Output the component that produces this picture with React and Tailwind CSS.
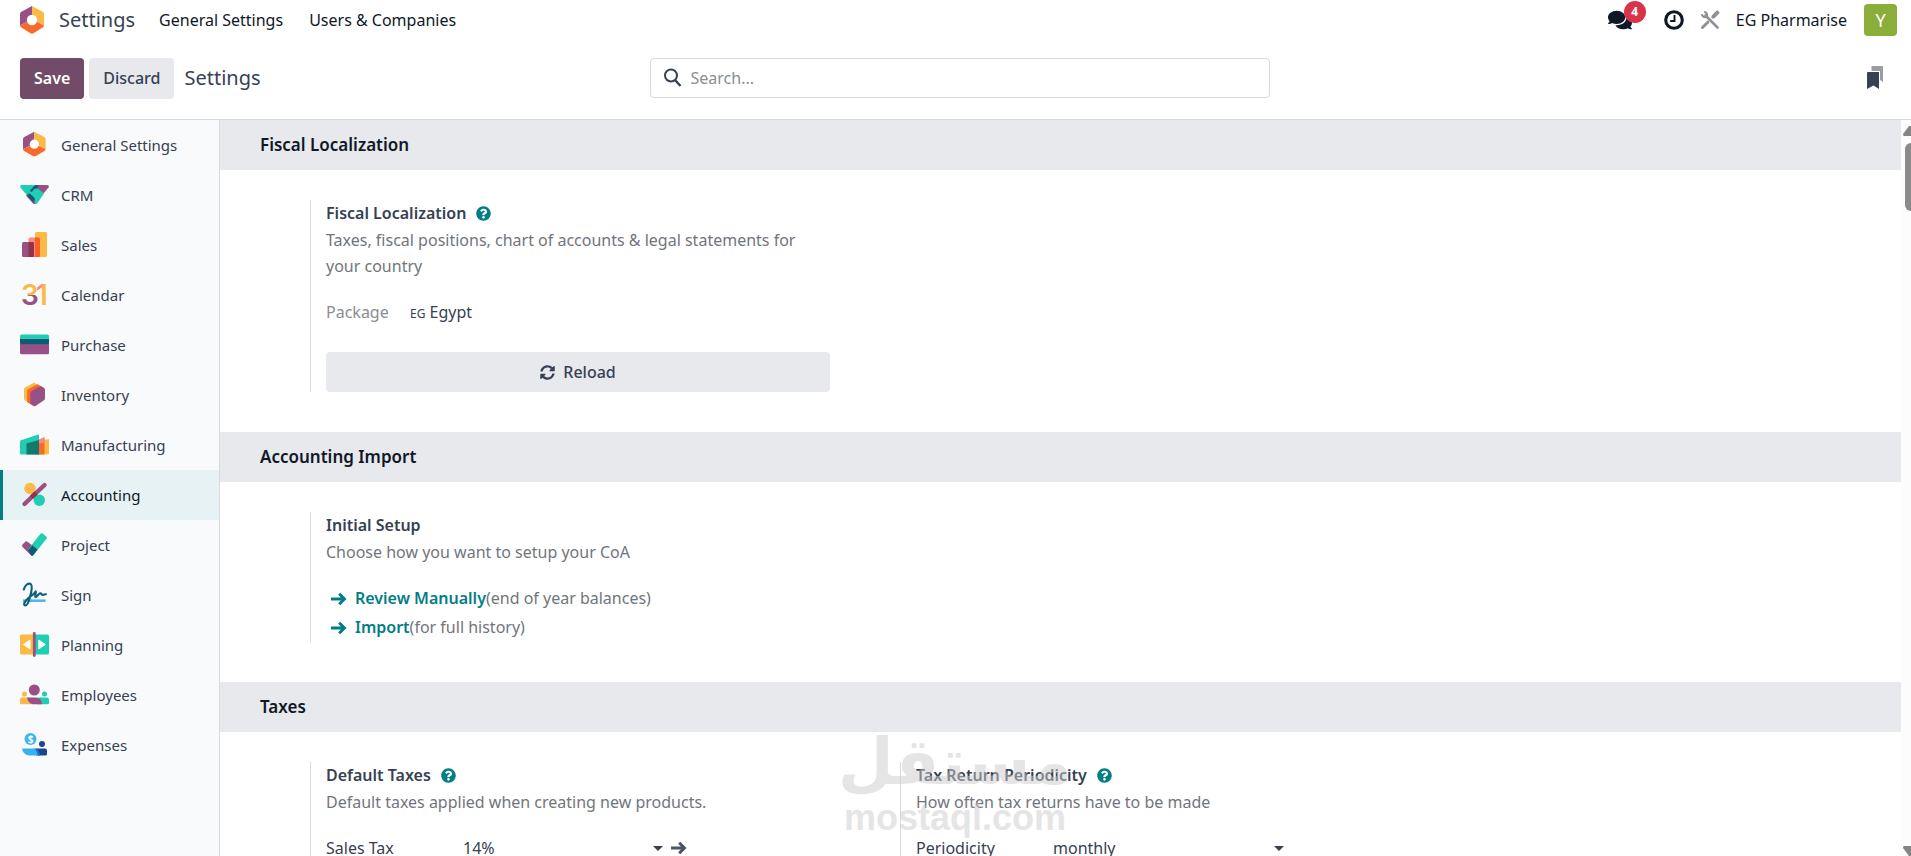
import { FaComments, FaQuestionCircle, FaSyncAlt } from "react-icons/fa";

const SettingsLogo = ({ className }) => (
  <svg viewBox="0 0 26 28" className={className} aria-hidden="true">
    <path d="M13 0 2 6Q1 6.600 1 8v11.500l12-6.500z" fill="#985184" />
    <path d="M13 0l11 6q1 .6 1 2v11.500l-12-6.500z" fill="#fbb945" />
    <path d="M1 19.500 13 13l12 6.500q0 1.200-1 1.800L14.500 27.300q-1.500.9-3 0L2 21.300q-1-.6-1-1.800z" fill="#f86a2c" />
    <circle cx="13" cy="14" r="5.200" fill="#fff" />
  </svg>
);

const AppIcon = ({ children }) => (
  <svg viewBox="0 0 30 30" className="size-[30px] shrink-0" aria-hidden="true">
    {children}
  </svg>
);

const apps = [
  {
    name: "General Settings",
    icon: (
      <AppIcon>
        <path d="M14.300 1.700 4.300 7Q3 7.800 3 9v10l11.300-5z" fill="#985184" />
        <path d="M14.300 1.700l10 5.300q1.300.8 1.300 2v10l-11.300-5z" fill="#fbb945" />
        <path d="M3 19l11.300-5 11.300 5q0 1.500-1.200 2.100l-8.600 5q-1.500.8-3 0l-8.600-5Q3 20.500 3 19z" fill="#f86a2c" />
        <circle cx="14.300" cy="14.200" r="4.600" fill="#fff" />
      </AppIcon>
    ),
  },
  {
    name: "CRM",
    icon: (
      <AppIcon>
        <path d="M15 5h12.500q2 .4 1.200 2.200L23.500 13.500 13 7z" fill="#985184" />
        <path d="M1.300 5H13l11 8.500-6.500 9.500q-1.800 1.800-3.800.3L.6 7.800Q-.5 5.600 1.300 5z" fill="#21cdb4" />
        <path d="M6 15.500 8 13.500l7 7v3.500q-1 .2-2-.6z" fill="#985184" />
        <path d="M7.500 16.500l.8-2.600q1-.9 2.200.2l4 4q.8 1.300 0 2.500l-1.800 1.200z" fill="#0f5a75" />
        <path d="M10 10.500 15 5h3.500l-.8 3.300-3.200.4-2.500 3q-1.500.5-2-1.200z" fill="#0f5a75" />
      </AppIcon>
    ),
  },
  {
    name: "Sales",
    icon: (
      <AppIcon>
        <rect x="15" y="2" width="12" height="25" rx="1.500" fill="#fbb945" />
        <rect x="8.500" y="7.500" width="11.500" height="19.500" rx="1.500" fill="#fc868b" />
        <path d="M15 7.500h3.500q1.500 0 1.500 1.500v16.500q0 1.500-1.500 1.500H15z" fill="#f86126" />
        <rect x="2" y="12" width="12" height="15" rx="1.500" fill="#985184" />
        <path d="M8.500 12h4q1.500 0 1.500 1.500v12q0 1.500-1.500 1.500h-4z" fill="#953047" />
      </AppIcon>
    ),
  },
  {
    name: "Calendar",
    icon: (
      <AppIcon>
        <defs>
          <linearGradient id="calendar-three" gradientUnits="userSpaceOnUse" x1="0" y1="0" x2="0" y2="30">
            <stop offset="50%" stopColor="#fbb945" />
            <stop offset="50%" stopColor="#985184" />
          </linearGradient>
          <linearGradient id="calendar-one" gradientUnits="userSpaceOnUse" x1="17" y1="4" x2="27" y2="10">
            <stop offset="45%" stopColor="#fc868b" />
            <stop offset="45%" stopColor="#fbb945" />
          </linearGradient>
        </defs>
        <g fontFamily="Inter, sans-serif" fontSize="28" fontWeight="600">
          <text x="1" y="25" fill="url(#calendar-three)">3</text>
          <text x="16" y="25" fill="url(#calendar-one)">1</text>
        </g>
      </AppIcon>
    ),
  },
  {
    name: "Purchase",
    icon: (
      <AppIcon>
        <path d="M1.500 4.500h26Q29 4.500 29 6v3.500H0V6q0-1.500 1.500-1.500z" fill="#21cdb4" />
        <path d="M0 14h29v9q0 1.300-1.500 1.300h-26Q0 24.300 0 23z" fill="#985184" />
        <path d="M0 9h29v4.300q0 1-1 1H1q-1 0-1-1z" fill="#0f5a75" />
      </AppIcon>
    ),
  },
  {
    name: "Inventory",
    icon: (
      <AppIcon>
        <path d="M14 2.700 5 7.500Q4 8 4 9.500v9q0 1.300 1 1.900l5 3L20 6z" fill="#fbb945" />
        <path d="M17.500 4.200 8 9.300q-.8.600-.8 1.700v11.200l4 2.300L23.500 7.500z" fill="#f86a2c" />
        <path d="M19.500 6.500q1-.5 2 0l2.500 1.400q1 .6 1 1.700v8.700q0 1.300-1 1.900l-8.500 5.700q-1 .6-2 0L10.300 24V13.200q0-1.200 1-1.900z" fill="#985184" />
      </AppIcon>
    ),
  },
  {
    name: "Manufacturing",
    icon: (
      <AppIcon>
        <path d="M19 10.500l10-1.200v13.700q0 1.500-1.500 1.500H19z" fill="#fbb945" />
        <path d="M16 11l8.500-3.800v17.300H16z" fill="#f86a2c" />
        <path d="M16 11l8.500-3.800v5.300L16 14z" fill="#fc868b" />
        <path d="M1 10.200 18.200 4.500q.8 0 .8.800v19.200H1.500Q0 24.500 0 23V11.500q0-.8 1-1.300z" fill="#21cdb4" />
        <path d="M6.500 13.500 19 10v14.500H6.500z" fill="#14786c" />
      </AppIcon>
    ),
  },
  {
    name: "Accounting",
    icon: (
      <AppIcon>
        <circle cx="10" cy="8.500" r="5.700" fill="#fbb945" />
        <circle cx="19.300" cy="20.300" r="5.700" fill="#21cdb4" />
        <path d="M4.500 24 24.500 5" stroke="#985184" strokeWidth="4.400" strokeLinecap="round" />
        <path d="M11.500 17.300 16 13" stroke="#953047" strokeWidth="4.400" />
      </AppIcon>
    ),
  },
  {
    name: "Project",
    icon: (
      <AppIcon>
        <path d="M2.500 14.500l3-3q1-.7 2 .2l10 7.800-4.200 5.700q-1 1-2 .2l-8.600-8.200q-1.200-1.300-.2-2.700z" fill="#985184" />
        <path d="M8 19.500 20.500 3.800q1-1 2.200-.2l3.500 3q1 .9.300 2.200L13.500 25z" fill="#21cdb4" />
        <path d="M8 20.500l4.300-5.200 5.200 4.200-4.500 5.700q-.8.900-1.800.2z" fill="#0f5a75" />
      </AppIcon>
    ),
  },
  {
    name: "Sign",
    icon: (
      <AppIcon>
        <path d="M3 20.700h22.500" stroke="#4cb9e8" strokeWidth="2.600" />
        <path
          d="M3.800 9.500C5 5 8.500 2.500 10.700 4c2.500 2 .5 9-1 14-1.200 4.500-2.700 7.500-4.300 7.500-2.200 0-1.500-4 3-7.500 3.300-2.500 6-4 7.300-6.500.8 1-1.200 4-.2 5.600 1.500.6 3.500-4.600 5-3.800 1 .6 1.200 1.700 2.800 1.500l2.500-.6"
          fill="none" stroke="#10607c" strokeWidth="2.200" strokeLinecap="round" strokeLinejoin="round"
        />
      </AppIcon>
    ),
  },
  {
    name: "Planning",
    icon: (
      <AppIcon>
        <rect x="0" y="4.500" width="14.500" height="20" rx="1.500" fill="#fbb945" />
        <rect x="14.500" y="4.500" width="14.500" height="20" rx="1.500" fill="#21cdb4" />
        <path d="M14.300 3.500v22" stroke="#985184" strokeWidth="2.800" strokeLinecap="round" />
        <path d="M10 10v9L3.500 14.500zM18.800 10v9l6.500-4.500z" fill="#fff" stroke="#fff" strokeLinejoin="round" />
      </AppIcon>
    ),
  },
  {
    name: "Employees",
    icon: (
      <AppIcon>
        <circle cx="14.300" cy="10" r="5.500" fill="#985184" />
        <circle cx="4.500" cy="14" r="2.500" fill="#fbb945" />
        <circle cx="24.500" cy="14" r="2.500" fill="#21cdb4" />
        <path d="M2 17.500h7l5 6.700H1.500Q0 24.200 0 22.700V19.500q0-2 2-2z" fill="#fbb945" />
        <path d="M17 17.500h10q2 0 2 2v3.200q0 1.500-1.500 1.500H17z" fill="#21cdb4" />
        <path d="M7 17.500h9q6 .8 6 6.700h-9q-5-.7-6-6.700z" fill="#985184" />
      </AppIcon>
    ),
  },
  {
    name: "Expenses",
    icon: (
      <AppIcon>
        <circle cx="10.500" cy="9" r="6" fill="#3fb6ea" />
        <text x="10.500" y="12.500" fontSize="10" fontWeight="700" fontFamily="Noto Sans, sans-serif" textAnchor="middle" fill="#fff">$</text>
        <circle cx="22" cy="14" r="3" fill="#1d4690" />
        <path d="M16 18.500h9q2 0 2 2V24q0 1.500-1.500 1.500H16z" fill="#1d4690" />
        <path d="M2 18.500h10.500q5 .8 5.500 7H9q-6-.7-7-7z" fill="#34b3f0" />
        <path d="M12.500 18.500q5 .8 5.500 7h2q-1-6.500-4-7z" fill="#1670c8" />
      </AppIcon>
    ),
  },
];

const ArrowRight = ({ className }) => (
  <svg viewBox="0 0 16 16" className={className} fill="none" stroke="currentColor" strokeWidth="3" aria-hidden="true">
    <path d="M0 8h13M8.200 2.800 13.400 8l-5.200 5.200" />
  </svg>
);

const Caret = () => (
  <svg viewBox="0 0 10 5" className="h-[5px] w-[10px] shrink-0" aria-hidden="true">
    <path d="M0 0h10L5 5z" fill="#374151" />
  </svg>
);

const Section = ({ title, children }) => (
  <section>
    <h2 className="flex h-[50px] items-center bg-[#e7e9ed] pl-10 text-[17px] font-semibold text-gray-900">{title}</h2>
    <div className="flex px-[90px] pt-[30px] pb-10">{children}</div>
  </section>
);

const Setting = ({ title, help, description, children }) => (
  <div className="w-[590px] border-l border-[#d8dadd] pr-[70px] pl-[15px] leading-[26px]">
    <h3 className="flex items-center gap-[10px] font-semibold text-gray-700">
      {title}
      {help && <FaQuestionCircle className="size-[15px] text-[#017e84]" />}
    </h3>
    <p className="pt-px text-[#71757d]">{description}</p>
    {children}
  </div>
);

const SettingSelect = ({ id, label, options, link }) => (
  <div className="mt-5 flex items-center text-gray-700">
    <label htmlFor={id} className="w-[137px]">{label}</label>
    <select id={id} className="w-[190px] grow-0 appearance-none bg-transparent">
      {options.map((option) => (
        <option key={option}>{option}</option>
      ))}
    </select>
    <span className={link ? "flex items-center gap-2" : "flex items-center pl-[31px]"}>
      <Caret />
      {link && (
        <button type="button" aria-label="Internal link">
          <ArrowRight className="size-4 text-gray-600" />
        </button>
      )}
    </span>
  </div>
);

const Navbar = () => (
  <header className="flex h-10 shrink-0 items-center pr-[14px] pl-[19px] text-gray-900">
    <SettingsLogo className="h-7 w-[26px]" />
    <a href="#settings" className="ml-[14px] text-xl text-gray-700">Settings</a>
    <nav className="ml-6 flex items-center gap-[26px]">
      <a href="#general">General Settings</a>
      <a href="#users">Users &amp; Companies</a>
    </nav>
    <div className="ml-auto flex items-center">
      <button type="button" aria-label="Messages" className="relative">
        <FaComments className="size-6" />
        <span className="absolute -top-[7px] left-4 flex size-[22px] items-center justify-center rounded-full bg-[#d9334a] text-xs font-bold text-white">4</span>
      </button>
      <button type="button" aria-label="Activities" className="ml-8">
        <svg viewBox="0 0 20 20" className="size-5" fill="none" stroke="currentColor">
          <circle cx="10" cy="10" r="8.300" strokeWidth="3.100" />
          <path d="M10.500 5v6H6.200" strokeWidth="1.900" />
        </svg>
      </button>
      <button type="button" aria-label="Developer tools" className="ml-4">
        <svg viewBox="0 0 20 20" className="size-5" fill="none" stroke="#8f9197">
          <path d="M5.500 5.500 17.500 17.500" strokeWidth="2.600" strokeLinecap="round" />
          <path d="M1.800 4.200A3.200 3.200 0 0 0 6.600 6.600 3.200 3.200 0 0 0 4.200 1.800" strokeWidth="2.200" />
          <path d="M11.800 8.200 14 6" strokeWidth="1.800" />
          <path d="M13.600 6.400 17.300 2.700" strokeWidth="4" strokeLinecap="round" />
          <path d="M2.500 17.500 7.800 12.200" strokeWidth="3" strokeLinecap="round" />
        </svg>
      </button>
      <span className="ml-4">EG Pharmarise</span>
      <button type="button" aria-label="User menu" className="ml-[17px] flex h-8 w-[33px] items-center justify-center rounded bg-[#8bad3a] text-lg text-white">Y</button>
    </div>
  </header>
);

const ControlPanel = () => (
  <div className="flex h-20 shrink-0 items-center border-b border-[#d8dadd] pr-3 pb-[3px] pl-5">
    <div className="flex flex-1 items-center">
      <button type="button" className="h-[41px] rounded bg-[#714b67] px-[14px] font-semibold text-white">Save</button>
      <button type="button" className="ml-[5px] h-[41px] rounded bg-[#e7e9ed] px-[14px] font-medium text-gray-700">Discard</button>
      <h1 className="ml-[10px] text-xl text-gray-700">Settings</h1>
    </div>
    <div className="flex h-10 w-[620px] items-center rounded border border-[#d8dadd] px-3">
      <svg viewBox="0 0 20 20" className="size-5 shrink-0" fill="none" stroke="#374151" aria-hidden="true">
        <circle cx="8" cy="7.500" r="6" strokeWidth="2" />
        <path d="M12 12 17.500 18" strokeWidth="2.400" />
      </svg>
      <input type="text" aria-label="Search" placeholder="Search..." className="ml-2 grow outline-none placeholder:text-[#8a8d93]" />
    </div>
    <div className="flex flex-1 justify-end">
      <button type="button" aria-label="Bookmarks" className="mr-4">
        <svg viewBox="0 0 16 24" className="h-6 w-4">
          <path d="M4.500 0H15q1 0 1 1v15l-3-2V5H4.500z" fill="#9a9da5" />
          <path d="M1 6h11v17l-5.500-3.500L0 23V7q0-1 1-1z" fill="#374151" />
        </svg>
      </button>
    </div>
  </div>
);

const Sidebar = () => (
  <nav className="w-[220px] shrink-0 border-r border-[#d8dadd] bg-[#f9fafb] text-[15px]">
    {apps.map(({ name, icon }) => {
      const active = name === "Accounting";
      return (
        <a
          key={name}
          href={`#${name}`}
          className={`flex h-[50px] items-center gap-[11px] border-l-[3px] pl-[17px] ${
            active ? "border-[#017e84] bg-[#e6f2f3] text-gray-900" : "border-transparent text-gray-700"
          }`}
        >
          {icon}
          {name}
        </a>
      );
    })}
  </nav>
);

const Scrollbar = () => (
  <div className="flex w-[10px] shrink-0 flex-col items-end overflow-hidden bg-[#fcfcfc] pt-[6px]" aria-hidden="true">
    <svg viewBox="0 0 8 10" className="h-[10px] w-2 shrink-0"><path d="M0 8 6 0h2v10H1Q0 10 0 8z" fill="#858585" /></svg>
    <div className="mt-[7px] h-[68px] w-[6px] shrink-0 rounded-l-md bg-[#8a8a8a]" />
    <svg viewBox="0 0 8 10" className="mt-auto h-[10px] w-2 shrink-0"><path d="M0 2 6 10h2V0H1Q0 0 0 2z" fill="#858585" /></svg>
  </div>
);

const Watermark = () => (
  <div className="pointer-events-none absolute bottom-[18px] left-[844px] flex w-[222px] flex-col items-center text-[#cdcdcd] opacity-50">
    <span lang="ar" dir="rtl" className="font-['DejaVu_Sans',sans-serif] text-[64px] leading-[72px] font-bold">مستقل</span>
    <span className="font-['Liberation_Sans',sans-serif] text-4xl leading-10 font-bold">mostaql.com</span>
  </div>
);

const App = () => {
  return (
    <div className="relative flex h-screen flex-col overflow-hidden bg-white font-['Noto_Sans',sans-serif] text-base">
      <Navbar />
      <ControlPanel />
      <div className="flex min-h-0 grow">
        <Sidebar />
        <main className="min-w-0 grow overflow-hidden">
          <Section title="Fiscal Localization">
            <Setting
              title="Fiscal Localization"
              help
              description="Taxes, fiscal positions, chart of accounts & legal statements for your country"
            >
              <div className="mt-5 flex items-center">
                <span className="w-[84px] text-[#8a8d93]">Package</span>
                <span className="text-gray-700"><span className="text-xs">EG</span> Egypt</span>
              </div>
              <button type="button" className="mt-[27px] flex h-10 w-full items-center justify-center gap-2 rounded bg-[#e7e9ed] font-medium text-gray-700">
                <FaSyncAlt className="size-[15px]" />
                Reload
              </button>
            </Setting>
          </Section>

          <Section title="Accounting Import">
            <Setting title="Initial Setup" description="Choose how you want to setup your CoA">
              <ul className="mt-[19px] leading-[29px] text-[#71757d]">
                <li className="flex items-center pl-[5px]">
                  <ArrowRight className="mr-2 size-4 text-[#017e84]" />
                  <a href="#review" className="font-semibold text-[#017e84]">Review Manually</a>(end of year balances)
                </li>
                <li className="flex items-center pl-[5px]">
                  <ArrowRight className="mr-2 size-4 text-[#017e84]" />
                  <a href="#import" className="font-semibold text-[#017e84]">Import</a>(for full history)
                </li>
              </ul>
            </Setting>
          </Section>

          <Section title="Taxes">
            <Setting title="Default Taxes" help description="Default taxes applied when creating new products.">
              <SettingSelect id="sales-tax" label="Sales Tax" options={["14%"]} link />
            </Setting>
            <Setting title="Tax Return Periodicity" help description="How often tax returns have to be made">
              <SettingSelect id="periodicity" label="Periodicity" options={["monthly"]} />
            </Setting>
          </Section>
        </main>
        <Scrollbar />
      </div>
      <Watermark />
    </div>
  );
};

export default App;
